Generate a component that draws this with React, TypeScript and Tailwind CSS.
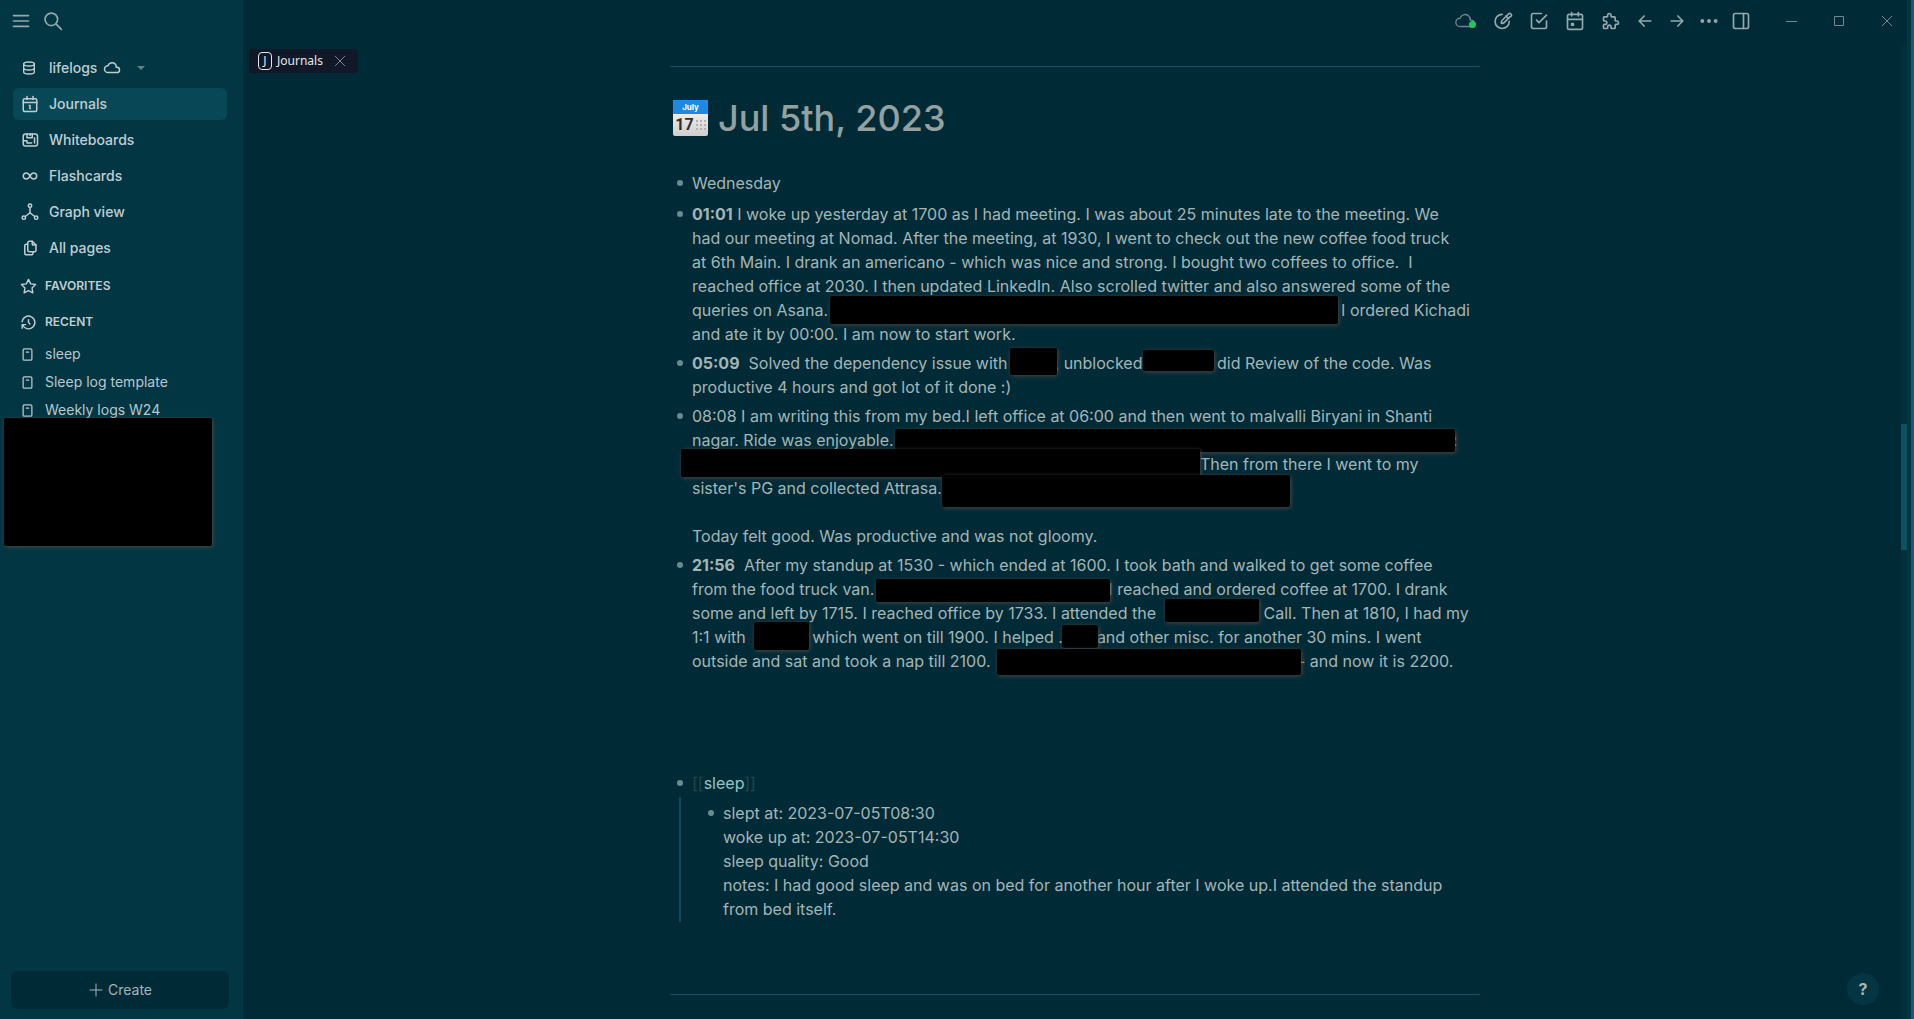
import type { ReactNode } from "react";

function Icon({ size = "size-5", stroke = 2, className = "", children }: { size?: string; stroke?: number; className?: string; children: ReactNode }) {
  return (
    <svg
      viewBox="0 0 24 24"
      fill="none"
      stroke="currentColor"
      strokeWidth={stroke}
      strokeLinecap="round"
      strokeLinejoin="round"
      aria-hidden="true"
      className={`shrink-0 ${size} ${className}`}
    >
      {children}
    </svg>
  );
}

const cloudPath = <path d="M6.657 18c-2.572 0 -4.657 -2.007 -4.657 -4.483c0 -2.475 2.085 -4.482 4.657 -4.482c.393 -1.762 1.794 -3.2 3.675 -3.773c1.88 -.572 3.956 -.193 5.444 1c1.488 1.19 2.162 3.007 1.77 4.769h.99c1.913 0 3.464 1.56 3.464 3.486c0 1.927 -1.551 3.487 -3.465 3.487h-11.878" />;

const menuIcon = <path d="M3 5.500h18M3 12h18M3 18.500h18" />;
const searchIcon = (
  <>
    <circle cx="10" cy="10" r="7.500" />
    <path d="M22 22l-6.500 -6.500" />
  </>
);
const databaseIcon = (
  <>
    <ellipse cx="12" cy="6" rx="8" ry="3" />
    <path d="M4 6v6a8 3 0 0 0 16 0v-6M4 12v6a8 3 0 0 0 16 0v-6" />
  </>
);
const journalIcon = (
  <>
    <rect x="3" y="5" width="18" height="17" rx="2" />
    <path d="M8 2v4M16 2v4M3 10h18M12 14v4M11 14h1M11.500 18h1" />
  </>
);
const whiteboardIcon = (
  <>
    <rect x="3" y="4" width="19" height="16" rx="3" />
    <path d="M3 13h5v3h6M8 4v5h7v-5M12 4v2M18 9v7" />
  </>
);
const infinityIcon = <path d="M9.828 9.172a4 4 0 1 0 0 5.656a10 10 0 0 0 2.172 -2.828a10 10 0 0 1 2.172 -2.828a4 4 0 1 1 0 5.656a10 10 0 0 1 -2.172 -2.828a10 10 0 0 0 -2.172 -2.828" />;
const graphIcon = (
  <>
    <circle cx="12" cy="3.5" r="2.3" />
    <circle cx="3.8" cy="19.5" r="2.3" />
    <circle cx="20.2" cy="19.5" r="2.3" />
    <path d="M12 6v7M12 13l-6.3 5M12 13l6.3 5" />
  </>
);
const filesIcon = (
  <>
    <path d="M15 3v4a1 1 0 0 0 1 1h4" />
    <path d="M18 17h-7a2 2 0 0 1 -2 -2v-10a2 2 0 0 1 2 -2h4l5 5v7a2 2 0 0 1 -2 2z" />
    <path d="M16 17v2a2 2 0 0 1 -2 2h-7a2 2 0 0 1 -2 -2v-10a2 2 0 0 1 2 -2h2" />
  </>
);
const starIcon = <path d="M12 17.75l-6.172 3.245l1.179 -6.873l-5 -4.867l6.9 -1l3.086 -6.253l3.086 6.253l6.9 1l-5 4.867l1.179 6.873z" />;
const historyIcon = (
  <>
    <path d="M12 8v4l2 2" />
    <path d="M3.05 11a9 9 0 1 1 .5 4M3 20v-5h5" />
  </>
);
const pageIcon = (
  <>
    <rect x="5" y="3" width="14" height="18" rx="2" />
    <path d="M10 8h4" />
  </>
);
const brushIcon = (
  <>
    <path d="M19.6 7.8l-7.2 7.2c-.9 .9 -3.4 .8 -3.4 .8s-.1 -2.500 .8 -3.400l7.800 -7.800a2 2 0 0 1 2.900 2.900z" transform="translate(1 -1)" />
    <path d="M19.500 12.500a8.500 8.500 0 1 1 -8.500 -8.500M15.500 6l2.500 2.500" />
  </>
);
const checkboxIcon = (
  <>
    <path d="M9 11l3 3l9 -9" />
    <path d="M21 12v7a2 2 0 0 1 -2 2h-14a2 2 0 0 1 -2 -2v-14a2 2 0 0 1 2 -2h10" />
  </>
);
const calendarIcon = (
  <>
    <rect x="3" y="4" width="18" height="18" rx="2" />
    <path d="M16 2v4M8 2v4M3 10h18M8 15h2v2h-2z" />
  </>
);
const puzzleIcon = <path d="M4 7h3a1 1 0 0 0 1 -1v-1a2 2 0 0 1 4 0v1a1 1 0 0 0 1 1h3a1 1 0 0 1 1 1v3a1 1 0 0 0 1 1h1a2 2 0 0 1 0 4h-1a1 1 0 0 0 -1 1v3a1 1 0 0 1 -1 1h-3a1 1 0 0 1 -1 -1v-1a2 2 0 0 0 -4 0v1a1 1 0 0 1 -1 1h-3a1 1 0 0 1 -1 -1v-3a1 1 0 0 1 1 -1h1a2 2 0 0 0 0 -4h-1a1 1 0 0 1 -1 -1v-3a1 1 0 0 1 1 -1" />;
const arrowLeft = <path d="M5 12h14M5 12l6 6M5 12l6 -6" />;
const arrowRight = <path d="M5 12h14M13 18l6 -6M13 6l6 6" />;
const dotsIcon = (
  <>
    <circle cx="4" cy="12" r="1.300" />
    <circle cx="12" cy="12" r="1.300" />
    <circle cx="20" cy="12" r="1.300" />
  </>
);
const sidebarIcon = (
  <>
    <rect x="3" y="3" width="18" height="18" rx="2" />
    <path d="M15 3v18" />
  </>
);
const crossIcon = <path d="M4 4l16 16M20 4l-16 16" />;

/* A blacked-out stretch of text; the cover may be taller than its line. */
function Redacted({ slot, cover }: { slot: string; cover: string }) {
  return (
    <span className={`relative z-10 inline-block h-6 align-top ${slot}`}>
      <span className={`absolute rounded-xs bg-black shadow-[1px_1px_4px_#4a4646] ${cover}`} />
    </span>
  );
}

function Line({ children }: { children?: ReactNode }) {
  return <span className="block min-h-6 whitespace-pre">{children}</span>;
}

function Block({ children }: { children: ReactNode }) {
  return (
    <div className="flex gap-[9px]">
      <span className="mt-[9px] ml-[7px] size-1.5 shrink-0 rounded-full bg-[#608e91]" />
      <div className="min-w-0 flex-1">{children}</div>
    </div>
  );
}

const navItems = [
  { label: "Journals", icon: journalIcon, active: true },
  { label: "Whiteboards", icon: whiteboardIcon },
  { label: "Flashcards", icon: infinityIcon },
  { label: "Graph view", icon: graphIcon },
  { label: "All pages", icon: filesIcon },
];

function Sidebar() {
  return (
    <aside className="flex w-[243px] shrink-0 flex-col bg-[#023643] text-[#c0ced2]">
      <div className="flex h-[42px] items-center gap-3 pl-[11px] text-[#93a9ad]">
        <button aria-label="Toggle left sidebar">
          <Icon>{menuIcon}</Icon>
        </button>
        <button aria-label="Search">
          <Icon>{searchIcon}</Icon>
        </button>
      </div>
      <nav className="mt-[10px] flex flex-col gap-1 pr-4 pl-[13px] text-sm font-medium">
        <button className="flex h-8 items-center pl-2">
          <Icon size="size-4">{databaseIcon}</Icon>
          <span className="ml-3">lifelogs</span>
          <Icon size="size-[18px]" className="ml-1.5">{cloudPath}</Icon>
          <svg viewBox="0 0 8 4" className="ml-4 h-1 w-2 fill-[#64808a]" aria-hidden="true">
            <path d="M0 0h8l-4 4z" />
          </svg>
        </button>
        {navItems.map((item) => (
          <a
            key={item.label}
            href="#"
            className={`flex h-8 items-center gap-[10px] rounded-md pl-2 ${item.active ? "bg-[#084856]" : ""}`}
          >
            <Icon size="size-[18px]">{item.icon}</Icon>
            {item.label}
          </a>
        ))}
      </nav>
      <div className="mt-1 flex h-9 items-center gap-2 pl-5 text-xs font-semibold">
        <Icon size="size-[17px]">{starIcon}</Icon>
        FAVORITES
      </div>
      <div className="flex h-9 items-center gap-2 pl-5 text-xs font-semibold">
        <Icon size="size-[17px]">{historyIcon}</Icon>
        RECENT
      </div>
      <ul className="relative text-sm text-[#b9c8cc]">
        {["sleep", "Sleep log template", "Weekly logs W24"].map((name) => (
          <li key={name}>
            <a href="#" className="flex h-7 items-center gap-[10px] pl-5">
              <Icon size="size-[15px]">{pageIcon}</Icon>
              {name}
            </a>
          </li>
        ))}
        <li className="absolute top-[78px] left-1 h-32 w-52 rounded-xs bg-black shadow-[1px_1px_4px_#4a4646]" />
      </ul>
      <div className="mt-auto pr-[14px] pb-[10px] pl-[11px]">
        <button className="flex h-[38px] w-full items-center justify-center gap-1 rounded-md bg-[#002b36] text-sm text-[#a4b5b6]">
          <Icon size="size-4" stroke={1.5}>
            <path d="M12 3v18M3 12h18" />
          </Icon>
          Create
        </button>
      </div>
    </aside>
  );
}

function Header() {
  return (
    <header className="flex h-[42px] shrink-0 items-center justify-end pr-[10px] text-[#93a9ad]">
      <button aria-label="Sync status" className="relative mr-[17px]">
        <Icon size="size-[22px]" stroke={1.500} className="text-[#6b858b]">{cloudPath}</Icon>
        <span className="absolute right-0 bottom-1 size-[7px] rounded-full bg-[#22c55e]" />
      </button>
      <div className="flex gap-4">
        <button aria-label="Draw"><Icon>{brushIcon}</Icon></button>
        <button aria-label="Tasks"><Icon>{checkboxIcon}</Icon></button>
        <button aria-label="Calendar"><Icon>{calendarIcon}</Icon></button>
        <button aria-label="Plugins"><Icon>{puzzleIcon}</Icon></button>
      </div>
      <div className="ml-3.5 flex gap-3">
        <button aria-label="Back"><Icon>{arrowLeft}</Icon></button>
        <button aria-label="Forward"><Icon>{arrowRight}</Icon></button>
        <button aria-label="More"><Icon>{dotsIcon}</Icon></button>
        <button aria-label="Toggle right sidebar"><Icon>{sidebarIcon}</Icon></button>
      </div>
      <div className="ml-[30px] flex gap-7 text-[#708a90]">
        <button aria-label="Minimize">
          <svg viewBox="0 0 20 20" className="size-5" stroke="currentColor" fill="none"><path d="M5 10.500h11" /></svg>
        </button>
        <button aria-label="Maximize">
          <svg viewBox="0 0 20 20" className="size-5" stroke="currentColor" fill="none"><path d="M5.500 5.500h9v9h-9z" /></svg>
        </button>
        <button aria-label="Close">
          <svg viewBox="0 0 20 20" className="size-5" stroke="currentColor" fill="none"><path d="M5 5l10 10M15 5l-10 10" /></svg>
        </button>
      </div>
    </header>
  );
}

function CalendarEmoji() {
  return (
    <span className="flex h-9 w-[35px] flex-col overflow-hidden rounded-xs bg-linear-to-b from-white to-[#cfcfcf]" aria-hidden="true">
      <span className="flex h-3.5 items-center justify-center bg-[#1e88e5] text-[8px] leading-none font-bold text-white">July</span>
      <span className="flex flex-1 items-center justify-center gap-0.5 font-['Roboto',sans-serif] text-base leading-none font-bold text-[#2f2f2f]">
        17
        <svg viewBox="0 0 10 10" className="size-2.5 fill-[#b0b0b0]">
          <path d="M0 0h2v2h-2zM4 0h2v2h-2zM8 0h2v2h-2zM0 4h2v2h-2zM4 4h2v2h-2zM8 4h2v2h-2zM0 8h2v2h-2zM4 8h2v2h-2zM8 8h2v2h-2z" />
        </svg>
      </span>
    </span>
  );
}

function Journal() {
  return (
    <article className="mx-auto w-full max-w-[810px] border-y border-[#0e5263] text-base leading-6 text-[#a4b5b6]">
      <h1 className="mt-[31px] flex h-10 items-center gap-[10px] pl-[3px] text-4xl font-medium text-[#93a1a1]">
        <CalendarEmoji />
        Jul 5th, 2023
      </h1>
      <div className="mt-[33px]">
        <Block>Wednesday</Block>
      </div>
      <div className="mt-[7px] flex flex-col gap-[5px]">
        <Block>
          <Line><b>01:01</b> I woke up yesterday at 1700 as I had meeting. I was about 25 minutes late to the meeting. We</Line>
          <Line>had our meeting at Nomad. After the meeting, at 1930, I went to check out the new coffee food truck</Line>
          <Line>at 6th Main. I drank an americano - which was nice and strong. I bought two coffees to office.  I</Line>
          <Line>reached office at 2030. I then updated LinkedIn. Also scrolled twitter and also answered some of the</Line>
          <Line>queries on Asana.<Redacted slot="w-[513px]" cover="-top-0.5 left-0.5 h-7 w-[508px]" />I ordered Kichadi</Line>
          <Line>and ate it by 00:00. I am now to start work.</Line>
        </Block>
        <Block>
          <Line><b>05:09</b>  Solved the dependency issue with<Redacted slot="w-[47px]" cover="-top-[3px] left-0.5 h-[27px] w-[47px]" />, unblocked<Redacted slot="w-[70px]" cover="-top-px left-0 h-[21px] w-[71px]" /> did Review of the code. Was</Line>
          <Line>productive 4 hours and got lot of it done :)</Line>
        </Block>
        <Block>
          <Line>08:08 I am writing this from my bed.I left office at 06:00 and then went to malvalli Biryani in Shanti</Line>
          <Line>nagar. Ride was enjoyable.<Redacted slot="w-[559px]" cover="top-px left-px h-[23px] w-[560px]" />:</Line>
          <Line><Redacted slot="w-[508px]" cover="-top-[3px] right-0 h-7 w-[519px]" />Then from there I went to my</Line>
          <Line>sister's PG and collected Attrasa.<Redacted slot="w-[348px]" cover="-top-px left-0 h-8 w-full" /></Line>
          <Line />
          <Line>Today felt good. Was productive and was not gloomy.</Line>
        </Block>
        <Block>
          <Line><b>21:56</b>  After my standup at 1530 - which ended at 1600. I took bath and walked to get some coffee</Line>
          <Line>from the food truck van.<Redacted slot="w-[234px]" cover="top-0.5 left-0.5 h-[23px] w-[234px]" />I reached and ordered coffee at 1700. I drank</Line>
          <Line>some and left by 1715. I reached office by 1733. I attended the<Redacted slot="w-[103px]" cover="-top-0.5 left-[9px] h-[23px] w-[94px]" /> Call. Then at 1810, I had my</Line>
          <Line>1:1 with <Redacted slot="w-[62px]" cover="-top-[3px] left-1 h-7 w-[55px]" />which went on till 1900. I helped .<Redacted slot="w-[34px]" cover="top-0 -left-px h-[23px] w-9" />and other misc. for another 30 mins. I went</Line>
          <Line>outside and sat and took a nap till 2100. <Redacted slot="w-[303px]" cover="top-0 left-0.5 h-[26px] w-[304px]" />- and now it is 2200.</Line>
        </Block>
      </div>
      <div className="mt-[98px]">
        <Block>
          <span className="text-[#23464c]">[[</span>
          <a href="#" className="text-[#93c5c5]">sleep</a>
          <span className="text-[#23464c]">]]</span>
        </Block>
      </div>
      <div className="mt-0.5 ml-[9px] border-l-2 border-[#0e4a5c] pt-1 pb-px pl-5">
        <Block>
          <Line>slept at: 2023-07-05T08:30</Line>
          <Line>woke up at: 2023-07-05T14:30</Line>
          <Line>sleep quality: Good</Line>
          <Line>notes: I had good sleep and was on bed for another hour after I woke up.I attended the standup</Line>
          <Line>from bed itself.</Line>
        </Block>
      </div>
      <div className="h-[72px]" />
    </article>
  );
}

export default function App() {
  return (
    <div className="flex h-screen overflow-hidden bg-[#002b36] font-['Inter',sans-serif]">
      <Sidebar />
      <div className="relative flex min-w-0 flex-1 flex-col">
        <Header />
        <div className="flex min-h-0 flex-1 pt-[3px]">
          <div className="relative min-w-0 flex-1">
            <div className="absolute top-1 left-1.5 flex h-6 items-center rounded-sm bg-[#111827] pr-[11px] pl-[9px] font-['Noto_Sans',sans-serif] text-xs text-[#e5e7eb]">
              <span className="mr-[5px] flex h-[18px] w-3.5 items-center justify-center rounded-sm border border-[#e5e7eb]">J</span>
              <button>Journals</button>
              <button aria-label="Close tab" className="ml-2.5 text-[#8a93a0]">
                <Icon size="size-3.5" stroke={1.500}>{crossIcon}</Icon>
              </button>
            </div>
            <main className="pt-[21px] pl-1.5">
              <Journal />
            </main>
          </div>
          <div className="w-1.5 bg-[#032f38]">
            <div className="mt-[379px] h-[126px] bg-[#0f525f]" />
          </div>
        </div>
        <button className="absolute right-7 bottom-[14px] size-8 rounded-full bg-[#033642] text-base font-bold text-[#a4b5b6]">?</button>
      </div>
      <div className="w-[7px] border-r-[3px] border-[#28507c] bg-[#023643]" />
    </div>
  );
}
